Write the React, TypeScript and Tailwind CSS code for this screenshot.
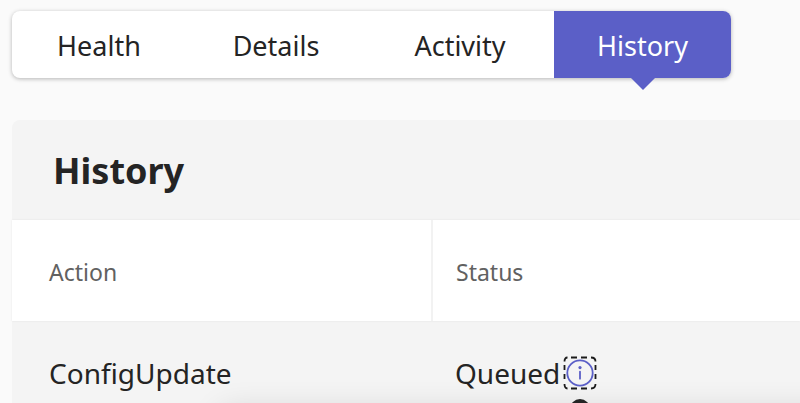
import React from 'react';

const tabs = [
  { name: 'Health', className: 'w-[174px] rounded-l-lg' },
  { name: 'Details', className: 'w-[180px]' },
  { name: 'Activity', className: 'w-[188px]' },
  { name: 'History', className: 'w-[177px] rounded-r-lg' }
];

const rows = [{ action: 'ConfigUpdate', status: 'Queued' }];

const TabBar: React.FC<{ active: string }> = ({ active }) => (
  <div role="tablist" className="flex w-fit rounded-lg bg-white shadow-[0_1px_4px_rgba(0,0,0,0.28)]">
    {tabs.map((tab) => (
      <button
        key={tab.name}
        type="button"
        role="tab"
        aria-selected={tab.name === active}
        className={`relative h-[67px] pt-0.5 text-[27px] leading-8 ${tab.className} ${
          tab.name === active ? 'bg-[#5b5fc7] text-white' : 'text-[#242424]'
        }`}
      >
        {tab.name}
        {tab.name === active && (
          <svg className="absolute left-1/2 top-full h-3 w-6 -translate-x-1/2" viewBox="0 0 24 12" fill="#5b5fc7">
            <path d="M0 0h24L12 12z" />
          </svg>
        )}
      </button>
    ))}
  </div>
);

const StatusInfo: React.FC = () => (
  <span className="relative flex">
    <button type="button" aria-label="Status information" aria-describedby="status-tip" className="block h-9 w-9">
      <svg className="h-9 w-9" viewBox="0 0 36 36" fill="none">
        <path
          d="M9 2.5h6M19 2.5h6M9 33.5h6M19 33.5h6M2.5 10v5M2.5 19v5M33.5 10v5M33.5 19v5M2.5 6.5Q2.5 2.5 5.5 2.5M29 2.5Q33.5 2.5 33.5 6.5M33.5 29Q33.5 33.5 29 33.5M5.5 33.5Q2.5 33.5 2.5 29"
          stroke="#1b1b1b"
          strokeWidth="1.8"
        />
        <circle cx="18" cy="18" r="12.7" stroke="#5b5fc7" strokeWidth="1.8" />
        <circle cx="18" cy="12.6" r="1.6" fill="#5b5fc7" />
        <path d="M18 16.7v7" stroke="#5b5fc7" strokeWidth="1.8" strokeLinecap="round" />
      </svg>
    </button>
    <div
      id="status-tip"
      role="tooltip"
      className="absolute left-1/2 top-full mt-4 h-20 w-[720px] -translate-x-1/2 rounded-lg bg-[#242424] shadow-[0_4px_32px_rgba(0,0,0,0.14)]"
    >
      <span className="absolute -top-2 left-1/2 h-5 w-5 -translate-x-1/2 rounded-full bg-[#242424]" />
    </div>
  </span>
);

export default function App() {
  return (
    <main className="h-screen overflow-hidden bg-[#fafafa] pl-3 pt-[11px] font-['Noto_Sans','Open_Sans',sans-serif] text-[#242424]">
      <TabBar active="History" />

      <section className="mt-[42px] rounded-tl-lg bg-[#f4f4f4]">
        <h1 className="px-[41px] pb-7 pt-[30px] text-[36px] font-bold leading-[42px]">History</h1>
        <table className="w-full table-fixed border-collapse text-left">
          <thead>
            <tr className="h-[101px] bg-white text-[23px] text-[#616161] shadow-[0_0_2px_rgba(0,0,0,0.08)]">
              <th scope="col" className="w-[420px] border-r-2 border-[#f2f2f2] pl-[37px] pt-1 font-normal">Action</th>
              <th scope="col" className="pl-[23px] pt-1 font-normal">Status</th>
            </tr>
          </thead>
          <tbody>
            {rows.map((row) => (
              <tr key={row.action} className="h-[103px] text-[28px]">
                <td className="pl-[37px]">{row.action}</td>
                <td className="pl-[23px]">
                  <div className="flex items-center gap-0.5">
                    {row.status}
                    <StatusInfo />
                  </div>
                </td>
              </tr>
            ))}
          </tbody>
        </table>
      </section>
    </main>
  );
}
